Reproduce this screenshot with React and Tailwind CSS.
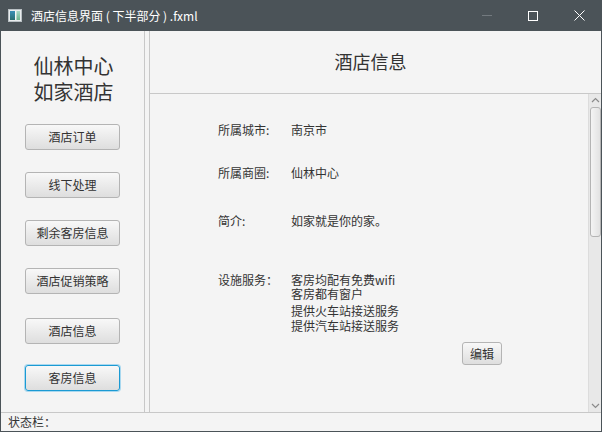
const FONT = "font-['Noto_Sans_CJK_SC',_'Noto_Sans',_sans-serif]";

function AppIcon() {
  return (
    <svg width="14" height="13" viewBox="0 0 14 13" aria-hidden>
      <defs>
        <linearGradient id="ic-l" x1="0" y1="0" x2="0" y2="1">
          <stop offset="0" stopColor="#3b8fb8" />
          <stop offset="1" stopColor="#2b6e70" />
        </linearGradient>
        <linearGradient id="ic-r" x1="0" y1="0" x2="0" y2="1">
          <stop offset="0" stopColor="#a9d9c8" />
          <stop offset="1" stopColor="#6fb58f" />
        </linearGradient>
      </defs>
      <rect x="0.5" y="0.5" width="13" height="12" fill="#e9ecee" stroke="#b9c0c4" />
      <rect x="2" y="2" width="5" height="9" fill="url(#ic-l)" />
      <rect x="7" y="2" width="1.5" height="9" fill="#f6f8f8" />
      <rect x="8.5" y="2" width="3.5" height="9" fill="url(#ic-r)" />
    </svg>
  );
}

function TitleBar() {
  return (
    <div className="h-[31px] flex items-center shrink-0 bg-[#4b5358] text-white">
      <div className="pl-[8px] pr-[9px] flex items-center">
        <AppIcon />
      </div>
      <span className="text-[12px] leading-[16px] text-white whitespace-pre">
        {'酒店信息界面 ( 下半部分 ) .fxml'}
      </span>
      <div className="ml-auto flex items-center h-full">
        <div className="w-[46px] h-full flex items-center justify-center">
          <div className="w-[10px] h-px bg-[#737a7f]" />
        </div>
        <div className="w-[46px] h-full flex items-center justify-center">
          <div className="w-[10px] h-[10px] border border-white" />
        </div>
        <div className="w-[46px] h-full flex items-center justify-center">
          <svg width="11" height="11" viewBox="0 0 11 11" aria-hidden>
            <path d="M0.5 0.5L10.5 10.5M10.5 0.5L0.5 10.5" stroke="#fff" strokeWidth="1" />
          </svg>
        </div>
      </div>
    </div>
  );
}

function FxButton({ children, focused, className = '' }) {
  return (
    <button
      className={`w-[95px] h-[26px] rounded-[3px] text-[12px] leading-none text-[#333] bg-gradient-to-b from-[#f8f8f8] to-[#dedede] ${
        focused
          ? 'border border-[#1b9ad3] shadow-[0_0_0_1px_#a9d8ef]'
          : 'border border-[#b4b4b4]'
      } ${className}`}
    >
      {children}
    </button>
  );
}

function LeftPane() {
  return (
    <div className="w-[143px] shrink-0 flex flex-col items-center">
      <div className="mt-[22px] text-[20px] leading-[26px] text-[#333] text-center pl-[2px]">
        <div>仙林中心</div>
        <div>如家酒店</div>
      </div>
      <FxButton className="mt-[19px]">酒店订单</FxButton>
      <FxButton className="mt-[22px]">线下处理</FxButton>
      <FxButton className="mt-[22px]">剩余客房信息</FxButton>
      <FxButton className="mt-[22px]">酒店促销策略</FxButton>
      <FxButton className="mt-[24px]">酒店信息</FxButton>
      <FxButton className="mt-[21px]" focused>
        客房信息
      </FxButton>
    </div>
  );
}

function Row({ label, children, className = '' }) {
  return (
    <div className={`flex text-[12px] leading-[16px] text-[#333] ${className}`}>
      <div className="w-[73px] shrink-0">{label}</div>
      <div>{children}</div>
    </div>
  );
}

function ScrollBar() {
  return (
    <div className="w-[13px] shrink-0 bg-[#e8e8e8] border-l border-[#dcdcdc] flex flex-col items-center">
      <svg width="9" height="12" viewBox="0 0 9 12" className="mt-px" aria-hidden>
        <path d="M1 7L4.5 3.5L8 7" fill="none" stroke="#8a8a8a" strokeWidth="1.2" />
      </svg>
      <div className="w-[11px] h-[130px] rounded-[3px] border border-[#b4b4b4] bg-gradient-to-r from-[#f4f4f4] to-[#e2e2e2]" />
      <div className="flex-1" />
      <svg width="9" height="12" viewBox="0 0 9 12" className="mb-[1px]" aria-hidden>
        <path d="M1 5L4.5 8.5L8 5" fill="none" stroke="#8a8a8a" strokeWidth="1.2" />
      </svg>
    </div>
  );
}

function RightPane() {
  return (
    <div className="flex-1 flex flex-col min-w-0">
      <div className="h-[63px] shrink-0 border-b border-[#c8c8c8] flex items-center justify-center pr-[10px]">
        <span className="text-[18px] leading-[24px] text-[#333] mt-[-3px]">酒店信息</span>
      </div>
      <div className="flex-1 flex min-h-0">
        <div className="flex-1 pl-[68px] pt-[28px] overflow-hidden">
          <Row label="所属城市:">南京市</Row>
          <Row label="所属商圈:" className="mt-[27px]">仙林中心</Row>
          <Row label="简介:" className="mt-[32px]">如家就是你的家。</Row>
          <Row label="设施服务：" className="mt-[43px]">
            <div className="leading-[14px] mt-px">
              <div>客房均配有免费wifi</div>
              <div>客房都有窗户</div>
              <div className="mt-[3px]">提供火车站接送服务</div>
              <div className="mt-px">提供汽车站接送服务</div>
            </div>
          </Row>
          <div className="flex pl-[244px] mt-[9px]">
            <button className="w-[40px] h-[23px] rounded-[3px] border border-[#b4b4b4] bg-gradient-to-b from-[#f8f8f8] to-[#dedede] text-[12px] leading-none text-[#333]">
              编辑
            </button>
          </div>
        </div>
        <ScrollBar />
      </div>
    </div>
  );
}

export default function App() {
  return (
    <div className={`w-[602px] h-[432px] flex flex-col bg-[#4b5358] overflow-hidden ${FONT}`}>
      <TitleBar />
      <div className="flex-1 mx-px mb-px bg-[#f4f4f4] flex flex-col min-h-0">
        <div className="flex-1 flex min-h-0">
          <LeftPane />
          <div className="w-[6px] shrink-0 border-l border-r border-[#c8c8c8]" />
          <RightPane />
        </div>
        <div className="h-[19px] shrink-0 border-t border-[#c8c8c8] pl-[7px] flex items-center">
          <span className="text-[12px] leading-[16px] text-[#333]">状态栏：</span>
        </div>
      </div>
    </div>
  );
}
